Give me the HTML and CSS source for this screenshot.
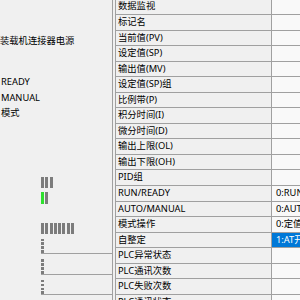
FILE: index.html
```html
<!DOCTYPE html>
<html lang="zh-CN">
<head>
    <meta charset="UTF-8">
    <title>数据监视</title>
    <link rel="stylesheet" href="styles.css">
</head>
<body>

<div class="app">
    <div class="side">
        <div class="label first">装载机连接器电源</div>
        <div class="label gap">READY</div>
        <div class="label">MANUAL</div>
        <div class="label">模式</div>

        <div class="meters">
            <div class="meter">
                <span class="bar"></span><span class="bar"></span><span class="bar"></span>
            </div>
            <div class="meter second">
                <span class="bar on"></span><span class="bar"></span>
            </div>
            <div class="meter wide">
                <span class="bar"></span><span class="bar"></span><span class="bar"></span><span class="bar"></span>
                <span class="bar"></span><span class="bar"></span><span class="bar"></span><span class="bar"></span>
            </div>
            <div class="meter row">
                <span class="bar"></span><span class="bar"></span><span class="bar"></span><span class="bar"></span>
                <span class="bar"></span><span class="bar"></span><span class="bar"></span><span class="bar"></span>
            </div>
            <div class="meter row">
                <span class="bar"></span><span class="bar"></span><span class="bar"></span><span class="bar"></span>
                <span class="bar"></span><span class="bar"></span><span class="bar"></span><span class="bar"></span>
            </div>
            <div class="meter row">
                <span class="bar"></span><span class="bar"></span><span class="bar"></span><span class="bar"></span>
                <span class="bar"></span><span class="bar"></span><span class="bar"></span><span class="bar"></span>
            </div>
        </div>
    </div>

    <div class="grid">
        <div class="row"><div class="name">数据监视</div><div class="value"></div></div>
        <div class="row"><div class="name">标记名</div><div class="value"></div></div>
        <div class="row"><div class="name">当前值(PV)</div><div class="value"></div></div>
        <div class="row"><div class="name">设定值(SP)</div><div class="value"></div></div>
        <div class="row"><div class="name">输出值(MV)</div><div class="value"></div></div>
        <div class="row"><div class="name">设定值(SP)组</div><div class="value"></div></div>
        <div class="row"><div class="name">比例带(P)</div><div class="value"></div></div>
        <div class="row"><div class="name">积分时间(I)</div><div class="value"></div></div>
        <div class="row"><div class="name">微分时间(D)</div><div class="value"></div></div>
        <div class="row"><div class="name">输出上限(OL)</div><div class="value"></div></div>
        <div class="row"><div class="name">输出下限(OH)</div><div class="value"></div></div>
        <div class="row"><div class="name">PID组</div><div class="value"></div></div>
        <div class="row"><div class="name">RUN/READY</div><div class="value">0:RUN/READY</div></div>
        <div class="row"><div class="name">AUTO/MANUAL</div><div class="value">0:AUTO/MANUAL</div></div>
        <div class="row"><div class="name">模式操作</div><div class="value">0:定值运行</div></div>
        <div class="row"><div class="name">自整定</div><div class="value selected">1:AT开始</div></div>
        <div class="row"><div class="name">PLC异常状态</div><div class="value"></div></div>
        <div class="row"><div class="name">PLC通讯次数</div><div class="value"></div></div>
        <div class="row"><div class="name">PLC失败次数</div><div class="value"></div></div>
        <div class="row"><div class="name">PLC通讯状态</div><div class="value"></div></div>
    </div>
</div>

</body>
</html>
```

FILE: styles.css
```css
body {
    margin: 0;
    padding: 0;
    background-color: #f0f0f0;
    font-family: "Noto Sans", "Noto Sans CJK SC", sans-serif;
    font-size: 9.3px;
    color: #000;
}

.app {
    display: flex;
    height: 300px;
    overflow: hidden;
}

/* left panel */

.side {
    width: 112px;
    flex-shrink: 0;
    border-right: 1px solid #a0a0a0;
    overflow: hidden;
}

.label {
    height: 15.5px;
    line-height: 15.5px;
    padding-left: 1px;
    white-space: nowrap;
}

.label.first {
    margin-top: 33px;
    padding-left: 0;
}

.label.gap {
    margin-top: 25.5px;
}

.meters {
    margin-top: 56px;
    padding-left: 41px;
}

.meter {
    display: flex;
    gap: 1.3px;
    height: 11px;
}

.meter.second {
    margin-top: 4px;
    height: 12px;
}

.meter.wide {
    margin-top: 19px;
}

.meter.row {
    margin-top: 5px;
}

.bar {
    width: 3px;
    height: 100%;
    background-color: #7c7c7c;
}

.bar.on {
    background-color: #2ee02e;
}

/* data grid */

.grid {
    flex: 1;
    margin-left: 2px;
    margin-top: -0.55px;
    border-left: 1px solid #a0a0a0;
}

.row {
    display: grid;
    grid-template-columns: 156px 1fr;
    height: 15.55px;
    box-sizing: border-box;
    border-bottom: 1px solid #a0a0a0;
    line-height: 14.55px;
    white-space: nowrap;
}

.name {
    padding-left: 2px;
    border-right: 1px solid #a0a0a0;
    overflow: hidden;
}

.value {
    padding-left: 4px;
    background-color: #f9f9f9;
    overflow: hidden;
}

.value.selected {
    background-color: #0078d7;
    color: #fff;
}
```
